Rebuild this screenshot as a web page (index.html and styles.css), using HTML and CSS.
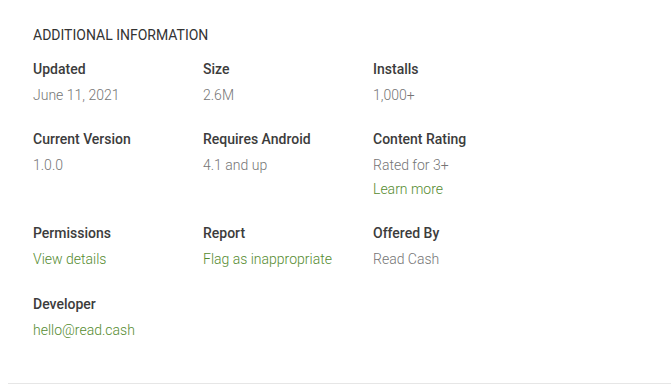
FILE: index.html
```html
<!DOCTYPE html>
<html lang="en">
<head>
  <meta charset="UTF-8" />
  <meta name="viewport" content="width=device-width, initial-scale=1" />
  <title>Additional Information</title>
  <link rel="stylesheet" href="styles.css">
</head>
<body>
  <section class="info">
    <h2 class="info-title">ADDITIONAL INFORMATION</h2>
    <div class="info-grid">
      <div class="item">
        <div class="label">Updated</div>
        <div class="value">June 11, 2021</div>
      </div>
      <div class="item">
        <div class="label">Size</div>
        <div class="value">2.6M</div>
      </div>
      <div class="item">
        <div class="label">Installs</div>
        <div class="value">1,000+</div>
      </div>

      <div class="item">
        <div class="label">Current Version</div>
        <div class="value">1.0.0</div>
      </div>
      <div class="item">
        <div class="label">Requires Android</div>
        <div class="value">4.1 and up</div>
      </div>
      <div class="item">
        <div class="label">Content Rating</div>
        <div class="value">Rated for 3+</div>
        <a class="value link" href="#">Learn more</a>
      </div>

      <div class="item">
        <div class="label">Permissions</div>
        <a class="value link" href="#">View details</a>
      </div>
      <div class="item">
        <div class="label">Report</div>
        <a class="value link" href="#">Flag as inappropriate</a>
      </div>
      <div class="item">
        <div class="label">Offered By</div>
        <div class="value">Read Cash</div>
      </div>

      <div class="item">
        <div class="label">Developer</div>
        <a class="value link" href="#">hello@read.cash</a>
      </div>
    </div>
  </section>
</body>
</html>
```

FILE: styles.css
```css
* { margin:0; padding:0; box-sizing:border-box }
html, body { width:100%; height:100%; background:#fff }
body {
  font-family:Roboto,"Liberation Sans",sans-serif;
  font-size:14px; line-height:24px;
  padding-left:8px;
}

.info {
  padding:23px 0 41px 25px;
  border-bottom:1px solid #e6e6e6;
}
.info-title {
  font-size:14px; font-weight:400; color:#333;
  line-height:24px; margin-bottom:10px;
}
.info-grid {
  display:grid;
  grid-template-columns:170px 170px 170px;
  row-gap:20px;
}
.item { display:flex; flex-direction:column; align-items:flex-start }
.item:nth-child(n+7) { margin-bottom:0 }
.item:nth-child(10) { margin-top:1px }
.label { font-weight:500; color:#3c3c3c; margin-bottom:2px }
.value { font-weight:300; color:#757575 }
.link { color:#558b2f; text-decoration:none }
```
